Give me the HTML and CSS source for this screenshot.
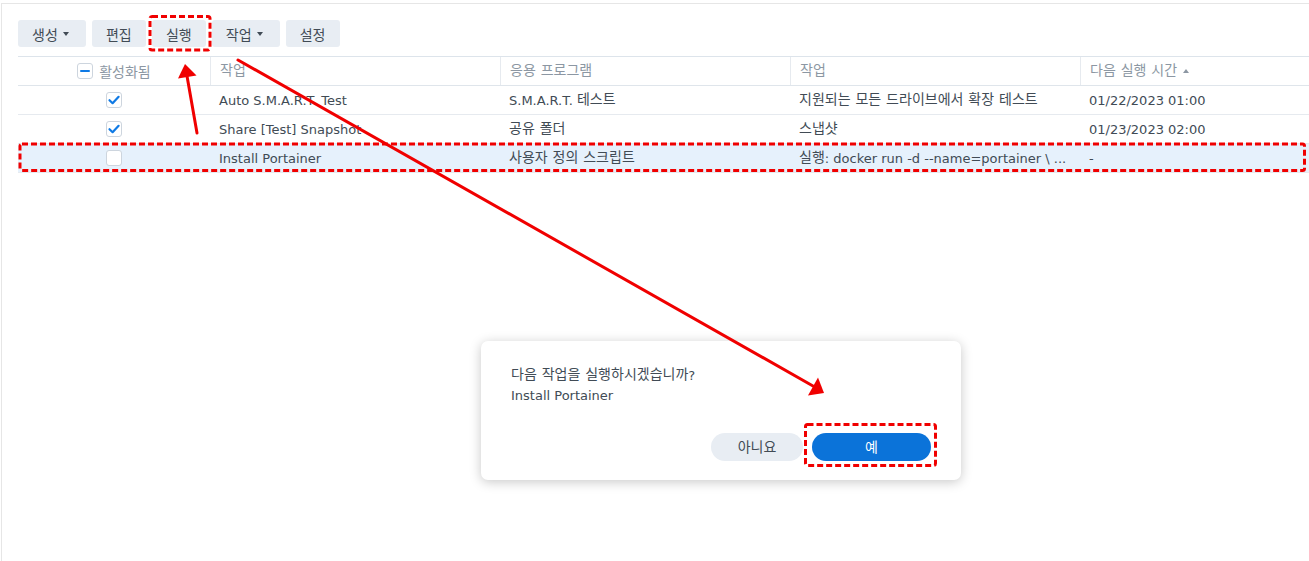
FILE: index.html
```html
<!DOCTYPE html>
<html lang="ko">
<head>
<meta charset="utf-8">
<title>작업 스케줄러</title>
<link rel="stylesheet" href="styles.css">
</head>
<body>
<div class="window">
  <div class="toolbar">
    <button class="btn has-caret"><span class="ko">생성</span><span class="caret"></span></button>
    <button class="btn"><span class="ko">편집</span></button>
    <button class="btn"><span class="ko">실행</span></button>
    <button class="btn has-caret"><span class="ko">작업</span><span class="caret"></span></button>
    <button class="btn"><span class="ko">설정</span></button>
  </div>
  <div class="grid">
    <div class="row head">
      <div class="cell c-check"><span class="cb cb-minus"></span><span class="ko">활성화됨</span></div>
      <div class="cell"><span class="ko">작업</span></div>
      <div class="cell"><span class="ko">응용 프로그램</span></div>
      <div class="cell"><span class="ko">작업</span></div>
      <div class="cell"><span class="ko">다음 실행 시간</span><span class="sort"></span></div>
    </div>
    <div class="row">
      <div class="cell c-check"><span class="cb cb-on"><svg viewBox="0 0 16 16" width="16" height="16"><path d="M3.5 8.2 L6.6 11.2 L12.6 4.8" fill="none" stroke="#0f7ae5" stroke-width="2.2" stroke-linecap="round" stroke-linejoin="round"/></svg></span></div>
      <div class="cell">Auto S.M.A.R.T. Test</div>
      <div class="cell">S.M.A.R.T. <span class="ko">테스트</span></div>
      <div class="cell"><span class="ko">지원되는 모든 드라이브에서 확장 테스트</span></div>
      <div class="cell">01/22/2023 01:00</div>
    </div>
    <div class="row">
      <div class="cell c-check"><span class="cb cb-on"><svg viewBox="0 0 16 16" width="16" height="16"><path d="M3.5 8.2 L6.6 11.2 L12.6 4.8" fill="none" stroke="#0f7ae5" stroke-width="2.2" stroke-linecap="round" stroke-linejoin="round"/></svg></span></div>
      <div class="cell">Share [Test] Snapshot</div>
      <div class="cell"><span class="ko">공유 폴더</span></div>
      <div class="cell"><span class="ko">스냅샷</span></div>
      <div class="cell">01/23/2023 02:00</div>
    </div>
    <div class="row selected">
      <div class="cell c-check"><span class="cb"></span></div>
      <div class="cell">Install Portainer</div>
      <div class="cell"><span class="ko">사용자 정의 스크립트</span></div>
      <div class="cell"><span class="ko">실행</span>: docker run -d --name=portainer \ ...</div>
      <div class="cell">-</div>
    </div>
  </div>
</div>

<div class="dialog">
  <div class="msg">
    <p><span class="ko">다음 작업을 실행하시겠습니까</span>?</p>
    <p>Install Portainer</p>
  </div>
  <div class="actions">
    <button class="dbtn"><span class="ko">아니요</span></button>
    <button class="dbtn primary"><span class="ko">예</span></button>
  </div>
</div>

<svg class="marks" viewBox="0 0 1309 561" width="1309" height="561">
  <g fill="none" stroke="#f00000" stroke-width="3" stroke-dasharray="6 3">
    <rect x="150" y="16.5" width="60" height="33.5" rx="2"/>
    <rect x="20" y="144" width="1284.5" height="26.5" rx="2"/>
    <rect x="805.5" y="424.5" width="130" height="41" rx="2"/>
  </g>
  <g stroke="#f00000" stroke-width="3" stroke-linecap="round">
    <line x1="197" y1="133" x2="187" y2="76"/>
    <line x1="238" y1="60" x2="813" y2="386"/>
  </g>
  <g fill="#f00000">
    <polygon points="185,64 178,78.5 196.5,75.5"/>
    <polygon points="824,393 818,377.5 808,395.5"/>
  </g>
</svg>
</body>
</html>
```

FILE: styles.css
```css
* { box-sizing: border-box; }

html, body {
  margin: 0;
  padding: 0;
  background: #ffffff;
}

body {
  width: 1309px;
  height: 561px;
  overflow: hidden;
  position: relative;
  font-family: "DejaVu Sans", "Noto Sans CJK KR", sans-serif;
  font-size: 13px;
  color: #414b55;
}

.ko {
  font-family: "Noto Sans CJK KR", sans-serif;
  font-size: 14px;
  line-height: 1;
  word-spacing: 1px;
  vertical-align: 1px;
}

.window {
  margin: 3px 0 0 1px;
  height: 558px;
  border-top: 1px solid #e6e6e6;
  border-left: 1px solid #e6e6e6;
  padding: 16px 0 0 16px;
}

.toolbar {
  display: flex;
  gap: 6px;
  height: 27px;
}

.btn {
  display: flex;
  align-items: center;
  justify-content: center;
  gap: 5px;
  height: 27px;
  min-width: 54px;
  padding: 0 14px;
  border: none;
  border-radius: 3px;
  background: #e8edf3;
  color: #414b55;
  font-family: inherit;
  font-size: 13px;
}

.btn .ko {
  vertical-align: 0;
}

.btn.has-caret {
  padding-right: 17px;
}

.caret {
  width: 0;
  height: 0;
  border-left: 3.5px solid transparent;
  border-right: 3.5px solid transparent;
  border-top: 4px solid #414b55;
}

.grid {
  margin-top: 9px;
  border-top: 1px solid #dde4eb;
}

.row {
  display: grid;
  grid-template-columns: 192px 290px 290px 290px 1fr;
  height: 29px;
  border-bottom: 1px solid #e6eaef;
}

.row.head {
  color: #8c97a3;
  height: 29px;
  border-bottom: 1px solid #dfe5eb;
}

.row.head .cell + .cell {
  border-left: 1px solid #e6eaef;
}

.row.selected {
  background: #e6f1fc;
}

.cell {
  display: flex;
  align-items: center;
  padding: 0 9px;
  white-space: nowrap;
  overflow: hidden;
  text-overflow: ellipsis;
  min-width: 0;
}

.cell:not(.c-check) {
  display: block;
  line-height: 29px;
}

.c-check {
  justify-content: center;
  gap: 6px;
  padding: 0;
}

.cb {
  width: 16px;
  height: 16px;
  border: 1px solid #cdd5de;
  border-radius: 3px;
  background: #ffffff;
  display: flex;
  align-items: center;
  justify-content: center;
  flex: none;
}

.cb svg {
  display: block;
  margin: -1px;
}

.cb-minus::before {
  content: "";
  width: 10px;
  height: 2px;
  background: #0f7ae5;
  border-radius: 1px;
}

.sort {
  display: inline-block;
  vertical-align: middle;
  margin-left: 6px;
  margin-top: -3px;
  width: 0;
  height: 0;
  border-left: 3px solid transparent;
  border-right: 3px solid transparent;
  border-bottom: 4px solid #8c97a3;
}

.dialog {
  position: absolute;
  left: 481px;
  top: 341px;
  width: 480px;
  height: 139px;
  background: #ffffff;
  border-radius: 7px;
  box-shadow: 0 2px 12px rgba(0, 0, 0, 0.22);
  padding: 25px 30px 19px 30px;
}

.msg p {
  margin: 0;
  line-height: 20px;
}

.actions {
  display: flex;
  justify-content: flex-end;
  gap: 9px;
  margin-top: 27px;
}

.dbtn {
  height: 28px;
  min-width: 92px;
  border: none;
  border-radius: 14px;
  background: #e8edf3;
  color: #414b55;
  font-family: inherit;
  font-size: 13px;
  padding: 0 16px;
}

.dbtn.primary {
  min-width: 119px;
  background: #0b73d9;
  color: #ffffff;
}

.marks {
  position: absolute;
  left: 0;
  top: 0;
  pointer-events: none;
}
```
